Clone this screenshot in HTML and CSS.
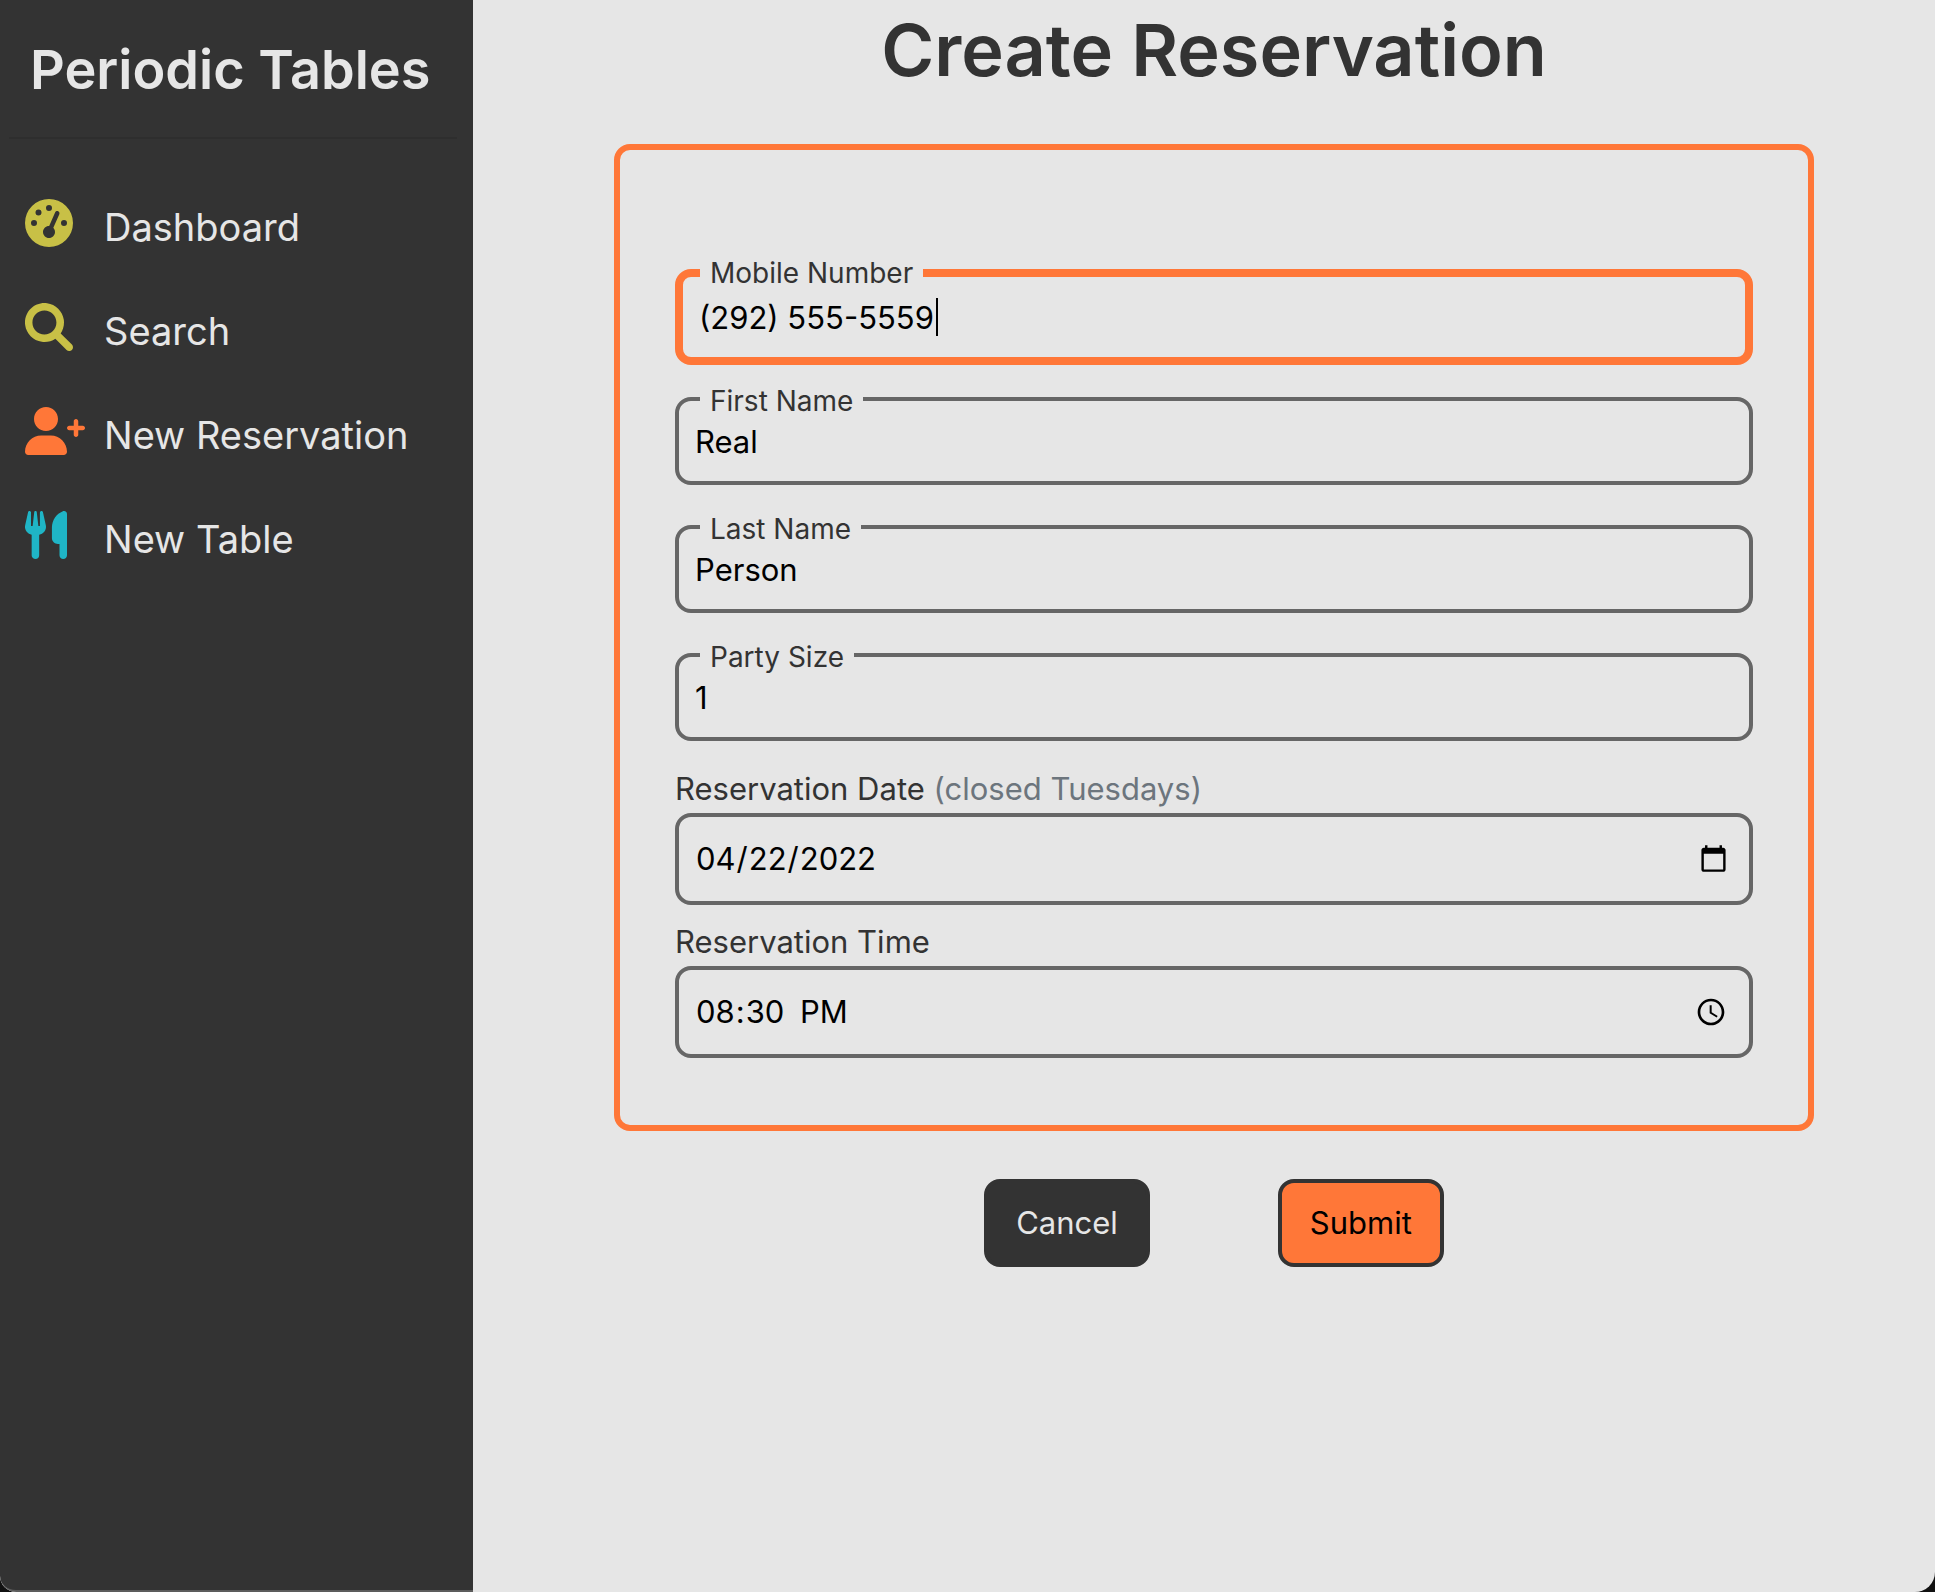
FILE: index.html
```html
<!DOCTYPE html>
<html lang="en-US">
<head>
  <meta charset="utf-8">
  <title>Periodic Tables</title>
  <link rel="stylesheet" href="styles.css">
</head>
<body>
  <div class="app">
    <aside class="sidebar">
      <h2 class="brand">Periodic Tables</h2>
      <hr class="divider">
      <nav class="menu">
        <a class="menu-item" href="#dashboard">
          <span class="menu-icon olive"><svg viewBox="0 0 512 512" width="48" height="48" aria-hidden="true"><path d="M0 256a256 256 0 1 1 512 0A256 256 0 1 1 0 256zM288 96a32 32 0 1 0-64 0 32 32 0 1 0 64 0zM256 416c35.3 0 64-28.7 64-64c0-17.4-6.9-33.1-18.1-44.6L366 161.7c5.3-12.1-.2-26.3-12.3-31.6s-26.3 .2-31.6 12.3L257.9 288c-.6 0-1.3 0-1.9 0c-35.3 0-64 28.7-64 64s28.7 64 64 64zM176 144a32 32 0 1 0-64 0 32 32 0 1 0 64 0zM96 288a32 32 0 1 0 0-64 32 32 0 1 0 0 64zm352-32a32 32 0 1 0-64 0 32 32 0 1 0 64 0z"/></svg></span>
          <span>Dashboard</span>
        </a>
        <a class="menu-item" href="#search">
          <span class="menu-icon olive"><svg viewBox="0 0 512 512" width="48" height="48" aria-hidden="true"><path d="M500.3 443.7l-119.7-119.7c27.22-40.41 40.65-90.9 33.46-144.7C401.8 87.79 326.8 13.32 235.2 1.723C99.01-15.51-15.51 99.01 1.724 235.2c11.6 91.64 86.08 166.7 177.6 178.9c53.8 7.189 104.3-6.236 144.7-33.46l119.7 119.7c15.62 15.62 40.95 15.62 56.57 0C515.9 484.7 515.9 459.3 500.3 443.7zM79.1 208c0-70.58 57.42-128 128-128s128 57.42 128 128c0 70.58-57.42 128-128 128S79.1 278.6 79.1 208z"/></svg></span>
          <span>Search</span>
        </a>
        <a class="menu-item" href="#new-reservation">
          <span class="menu-icon orange"><svg viewBox="0 0 640 512" width="60" height="48" aria-hidden="true"><path d="M224 256c70.7 0 128-57.31 128-128S294.7 0 224 0C153.3 0 96 57.31 96 128S153.3 256 224 256zM274.7 304H173.3C77.61 304 0 381.6 0 477.3C0 496.5 15.52 512 34.66 512h378.7C432.5 512 448 496.5 448 477.3C448 381.6 370.4 304 274.7 304zM616 200h-48v-48C568 138.8 557.3 128 544 128s-24 10.75-24 24v48h-48C458.8 200 448 210.8 448 224s10.75 24 24 24h48v48C520 309.3 530.8 320 544 320s24-10.75 24-24v-48h48C629.3 248 640 237.3 640 224S629.3 200 616 200z"/></svg></span>
          <span>New Reservation</span>
        </a>
        <a class="menu-item" href="#new-table">
          <span class="menu-icon teal"><svg viewBox="0 0 448 512" width="42" height="48" aria-hidden="true"><path d="M221.6 148.7C224.7 161.3 224.8 174.5 222.1 187.2C219.3 199.1 213.6 211.9 205.6 222.1C191.1 238.6 173 249.1 151.1 254.1V472C151.1 482.6 147.8 492.8 140.3 500.3C132.8 507.8 122.6 512 111.1 512C101.4 512 91.22 507.8 83.71 500.3C76.21 492.8 71.1 482.6 71.1 472V254.1C50.96 250.1 31.96 238.9 18.3 222.4C10.19 212.2 4.529 200.3 1.755 187.5C-1.019 174.7-.8315 161.5 2.303 148.8L32.51 12.45C33.36 8.598 35.61 5.197 38.82 2.9C42.02 .602 45.97-.4297 49.89 .0026C53.82 .4302 57.46 2.303 60.1 5.259C62.74 8.214 64.18 12.04 64.16 16V160H81.53L98.62 11.91C99.02 8.635 100.6 5.621 103.1 3.434C105.5 1.248 108.7 .0401 111.1 .0401C115.3 .0401 118.5 1.248 120.9 3.434C123.4 5.621 124.1 8.635 125.4 11.91L142.5 160H159.1V16C159.1 12.07 161.4 8.268 163.1 5.317C166.6 2.366 170.2 .474 174.1 .0026C178-.4262 181.1 .619 185.2 2.936C188.4 5.253 190.6 8.677 191.5 12.55L221.6 148.7zM448 472C448 482.6 443.8 492.8 436.3 500.3C428.8 507.8 418.6 512 408 512C397.4 512 387.2 507.8 379.7 500.3C372.2 492.8 368 482.6 368 472V352H351.2C342.8 352 334.4 350.3 326.6 347.1C318.9 343.8 311.8 339.1 305.8 333.1C299.9 327.1 295.2 320 291.1 312.2C288.8 304.4 287.2 296 287.2 287.6L287.1 173.8C288 136.9 299.1 100.8 319.8 70.28C340.5 39.71 369.8 16.05 404.1 2.339C408.1 .401 414.2-.3202 419.4 .2391C424.6 .7982 429.6 2.62 433.9 5.546C438.2 8.472 441.8 12.41 444.2 17.03C446.7 21.64 447.1 26.78 448 32V472z"/></svg></span>
          <span>New Table</span>
        </a>
      </nav>
    </aside>

    <main class="content">
      <h1 class="page-title">Create Reservation</h1>
      <form class="reservation-form">
        <div class="card">
          <div class="field active">
            <label class="float-label" for="mobile">Mobile Number</label>
            <input class="control" id="mobile" type="tel" value="(292) 555-5559">
            <span class="caret"></span>
          </div>
          <div class="field">
            <label class="float-label" for="first">First Name</label>
            <input class="control" id="first" type="text" value="Real">
          </div>
          <div class="field">
            <label class="float-label" for="last">Last Name</label>
            <input class="control" id="last" type="text" value="Person">
          </div>
          <div class="field">
            <label class="float-label" for="party">Party Size</label>
            <input class="control" id="party" type="text" inputmode="numeric" value="1">
          </div>
          <div class="stacked">
            <label for="date">Reservation Date <span class="hint">(closed Tuesdays)</span></label>
            <input class="control" id="date" type="date" value="2022-04-22">
          </div>
          <div class="stacked">
            <label for="time">Reservation Time</label>
            <input class="control" id="time" type="time" value="20:30">
          </div>
        </div>
        <div class="actions">
          <button class="btn cancel" type="button">Cancel</button>
          <button class="btn submit" type="submit">Submit</button>
        </div>
      </form>
    </main>
  </div>
</body>
</html>
```
FILE: styles.css
```css
:root {
  --dark: #333333;
  --light: #e6e6e6;
  --orange: #ff7738;
  --grey: #666666;
}

* {
  box-sizing: border-box;
}

body {
  margin: 0;
  background: #111111;
  color: var(--dark);
  font-family: Inter, "Liberation Sans", sans-serif;
  font-size: 31px;
  line-height: 48px;
}

.app {
  display: flex;
  min-height: 100vh;
  overflow: hidden;
  border-radius: 0 0 20px 16px;
  background: var(--light);
}

.sidebar {
  flex: none;
  width: 473px;
  padding: 34px 16px 0 9px;
  border-bottom: 2px solid #5c5c5c;
  border-bottom-left-radius: 16px;
  background: var(--dark);
  color: var(--light);
}

.brand {
  margin: 0;
  padding-left: 21px;
  font-size: 54px;
  font-weight: 600;
  line-height: 72px;
  white-space: nowrap;
}

.divider {
  height: 2px;
  margin: 31px 0 0;
  border: 0;
  background: #2e2e2e;
}

.menu {
  display: flex;
  flex-direction: column;
  gap: 56px;
  padding: 60px 0 0 16px;
}

.menu-item {
  display: flex;
  height: 48px;
  color: inherit;
  font-size: 38px;
  line-height: 56px;
  text-decoration: none;
  white-space: nowrap;
}

.menu-icon {
  flex: none;
  width: 79px;
}

.menu-icon svg {
  display: block;
  fill: currentColor;
}

.olive { color: #c8c046; }
.orange { color: var(--orange); }
.teal { color: #1fb5c6; }

.content {
  flex: 1;
  padding-left: 20px;
}

.page-title {
  margin: 0;
  padding: 2px 0 46px;
  font-size: 72px;
  font-weight: 600;
  line-height: 96px;
  text-align: center;
}

.reservation-form {
  width: 1200px;
  max-width: 100%;
  margin: 0 auto;
}

.card {
  padding: 119px 55px 67px;
  border: 6px solid var(--orange);
  border-radius: 16px;
}

.field {
  position: relative;
}

.field + .field {
  margin-top: 40px;
}

.active + .field {
  margin-top: 32px;
}

.float-label {
  position: absolute;
  top: -16px;
  left: 25px;
  padding: 0 10px;
  background: var(--light);
  font-size: 28px;
  line-height: 40px;
}

.control {
  display: block;
  width: 100%;
  height: 88px;
  padding: 0 16px;
  border: 4px solid var(--grey);
  border-radius: 16px;
  outline: 0;
  background: transparent;
  color: #000000;
  font: inherit;
}

.active .control {
  height: 96px;
  border: 8px solid var(--orange);
}

.caret {
  position: absolute;
  top: 29px;
  left: 261px;
  width: 2px;
  height: 38px;
  background: #000000;
}

.stacked {
  display: flex;
  flex-direction: column;
  margin-top: 13px;
}

.field + .stacked {
  margin-top: 24px;
}

.stacked .control {
  height: 92px;
  padding-right: 18px;
}

.stacked .control::-webkit-datetime-edit-ampm-field {
  margin-left: 8px;
}

.hint {
  color: #6c757d;
}

.actions {
  display: flex;
  justify-content: center;
  gap: 128px;
  padding-top: 48px;
}

.btn {
  height: 88px;
  padding: 0 28px;
  border: 4px solid var(--dark);
  border-radius: 16px;
  font: inherit;
}

.cancel {
  background: var(--dark);
  color: var(--light);
}

.submit {
  background: var(--orange);
  color: #000000;
}
```
